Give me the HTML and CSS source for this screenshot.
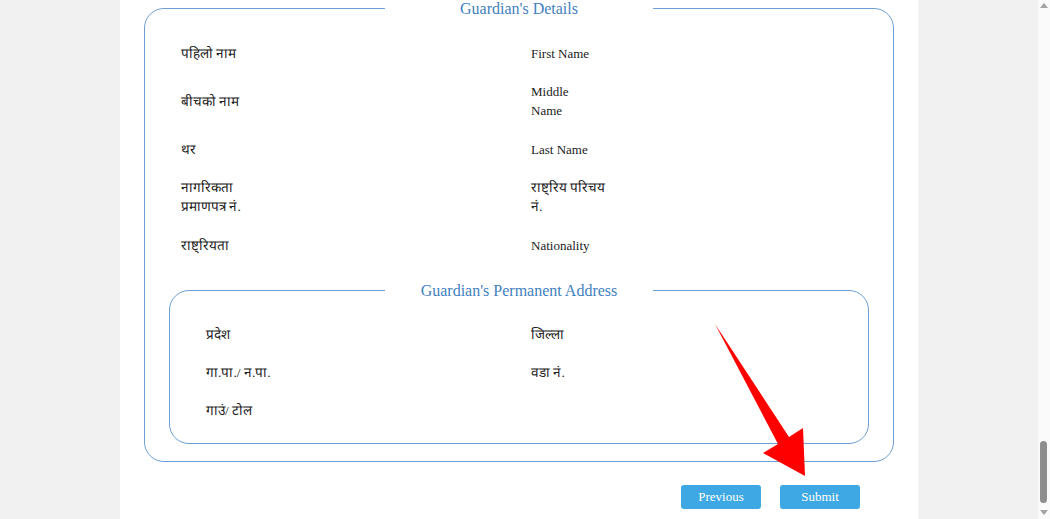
FILE: index.html
```html
<!DOCTYPE html>
<html lang="ne">
<head>
    <meta charset="UTF-8">
    <title>Guardian's Details</title>
    <link rel="stylesheet" href="styles.css">
</head>
<body>
    <div class="page">
        <div class="sheet">
            <fieldset class="box">
                <legend>Guardian's Details</legend>
                <div class="rows">
                    <div class="cell"><span class="lbl np wide">पहिलो नाम</span></div>
                    <div class="cell"><span class="lbl en">First Name</span></div>

                    <div class="cell"><span class="lbl np wide">बीचको नाम</span></div>
                    <div class="cell"><span class="lbl en">Middle Name</span></div>

                    <div class="cell"><span class="lbl np wide">थर</span></div>
                    <div class="cell"><span class="lbl en">Last Name</span></div>

                    <div class="cell"><span class="lbl np wide">नागरिकता प्रमाणपत्र नं.</span></div>
                    <div class="cell"><span class="lbl np wide">राष्ट्रिय परिचय<br>नं.</span></div>

                    <div class="cell"><span class="lbl np wide">राष्ट्रियता</span></div>
                    <div class="cell"><span class="lbl en">Nationality</span></div>
                </div>

                <fieldset class="box inner">
                    <legend>Guardian's Permanent Address</legend>
                    <div class="rows short">
                        <div class="cell"><span class="lbl np wide">प्रदेश</span></div>
                        <div class="cell"><span class="lbl np">जिल्ला</span></div>

                        <div class="cell"><span class="lbl np wide">गा.पा./ न.पा.</span></div>
                        <div class="cell"><span class="lbl np">वडा नं.</span></div>

                        <div class="cell"><span class="lbl np wide">गाउं/ टोल</span></div>
                        <div class="cell"></div>
                    </div>
                </fieldset>
            </fieldset>

            <div class="actions">
                <button class="btn">Previous</button>
                <button class="btn">Submit</button>
            </div>
        </div>

        <!-- annotation arrow over the form -->
        <svg class="arrow" width="1038" height="519" viewBox="0 0 1038 519">
            <polygon points="715,324 789,437 803,428 805,476 763,453 778,444" fill="#ff0000"/>
        </svg>
    </div>

    <div class="scrollbar">
        <span class="up"></span>
        <span class="thumb"></span>
        <span class="down"></span>
    </div>
</body>
</html>
```

FILE: styles.css
```css
html, body {
    margin: 0;
    height: 519px;
    overflow: hidden;
}

body {
    display: flex;
    font-family: "Liberation Serif", "Times New Roman", serif;
    color: #222;
}

.page {
    position: relative;
    flex: 1;
    background: #f1f1f1;
}

.sheet {
    width: 798px;
    height: 519px;
    margin: 0 auto;
    background: #fff;
}

.box {
    margin: 0 24px;
    padding: 0 24px 17px;
    border: 1px solid #6c9fd2;
    border-radius: 20px;
}

.box legend {
    width: 268px;
    margin: 0 auto;
    padding: 0;
    text-align: center;
    font-size: 16px;
    line-height: 17px;
    color: #3f7fc0;
}

.box.inner {
    margin: 13px 0 0;
    padding: 0 24px 14px;
}

.rows {
    display: grid;
    grid-template-columns: 1fr 1fr;
    grid-auto-rows: 48px;
    padding-top: 12px;
}

.rows.short {
    grid-auto-rows: 38px;
    padding-top: 16px;
}

.cell {
    display: flex;
    align-items: center;
    padding-left: 12px;
}

.lbl {
    display: block;
    width: 70px;
    line-height: 19px;
}

.lbl.wide {
    width: 100px;
}

.np {
    font-size: 13.5px;
}

.en {
    font-size: 13px;
}

.actions {
    display: flex;
    justify-content: flex-end;
    gap: 19px;
    margin-top: 23px;
    padding-right: 58px;
}

.btn {
    width: 80px;
    height: 24px;
    border: none;
    border-radius: 3px;
    background: #3ea8e5;
    color: #fff;
    font-family: "Liberation Serif", "Times New Roman", serif;
    font-size: 13px;
    padding: 0;
}

.arrow {
    position: absolute;
    left: 0;
    top: 0;
    pointer-events: none;
}

.scrollbar {
    position: relative;
    width: 12px;
    background: #fafafa;
}

.scrollbar .thumb {
    position: absolute;
    left: 2px;
    top: 441px;
    width: 7px;
    height: 62px;
    border-radius: 4px;
    background: #8d8d8d;
}

.scrollbar .up,
.scrollbar .down {
    position: absolute;
    left: 2px;
    width: 0;
    height: 0;
    border-left: 4px solid transparent;
    border-right: 4px solid transparent;
}

.scrollbar .up {
    top: 3px;
    border-bottom: 5px solid #a3a3a3;
}

.scrollbar .down {
    top: 510px;
    border-top: 5px solid #a3a3a3;
}
```
